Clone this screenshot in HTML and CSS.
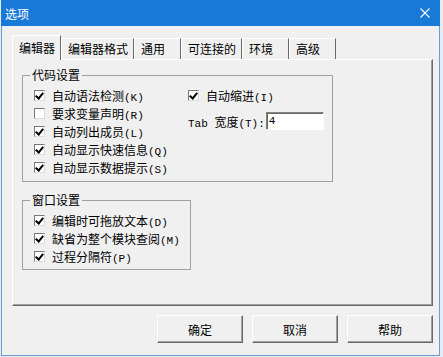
FILE: index.html
```html
<!DOCTYPE html>
<html lang="zh-CN">
<head>
    <meta charset="UTF-8">
    <title>选项</title>
    <link rel="stylesheet" href="styles.css">
</head>
<body>
    <div class="dialog">
        <div class="titlebar">
            <span class="title">选项</span>
            <svg class="close" width="10" height="10" viewBox="0 0 10 10">
                <path d="M0.5 0.5 L9.5 9.5 M9.5 0.5 L0.5 9.5" stroke="#fff" stroke-width="1.1" fill="none"/>
            </svg>
        </div>

        <div class="content">
            <div class="tabs">
                <div class="tab active">编辑器</div>
                <div class="tab">编辑器格式</div>
                <div class="tab">通用</div>
                <div class="tab">可连接的</div>
                <div class="tab">环境</div>
                <div class="tab">高级</div>
            </div>

            <div class="panel">
                <fieldset class="group code-group">
                    <legend>代码设置</legend>
                    <div class="cols">
                        <div class="col-left">
                            <div class="check"><span class="box checked"></span><span>自动语法检测<span class="key">(K)</span></span></div>
                            <div class="check"><span class="box"></span><span>要求变量声明<span class="key">(R)</span></span></div>
                            <div class="check"><span class="box checked"></span><span>自动列出成员<span class="key">(L)</span></span></div>
                            <div class="check"><span class="box checked"></span><span>自动显示快速信息<span class="key">(Q)</span></span></div>
                            <div class="check"><span class="box checked"></span><span>自动显示数据提示<span class="key">(S)</span></span></div>
                        </div>
                        <div class="col-right">
                            <div class="check"><span class="box checked"></span><span>自动缩进<span class="key">(I)</span></span></div>
                            <div class="tab-row">
                                <label><span class="key">Tab </span>宽度<span class="key">(T):</span></label>
                                <input class="text-field" type="text" value="4">
                            </div>
                        </div>
                    </div>
                </fieldset>

                <fieldset class="group window-group">
                    <legend>窗口设置</legend>
                    <div class="check"><span class="box checked"></span><span>编辑时可拖放文本<span class="key">(D)</span></span></div>
                    <div class="check"><span class="box checked"></span><span>缺省为整个模块查阅<span class="key">(M)</span></span></div>
                    <div class="check"><span class="box checked"></span><span>过程分隔符<span class="key">(P)</span></span></div>
                </fieldset>
            </div>

            <div class="buttons">
                <button class="btn">确定</button>
                <button class="btn">取消</button>
                <button class="btn">帮助</button>
            </div>
        </div>
    </div>
</body>
</html>
```

FILE: styles.css
```css
:root {
    --face: #f0f0f0;
    --light: #ffffff;
    --shadow: #a0a0a0;
    --dark: #696969;
    --title-blue: #1979d6;
}

* {
    margin: 0;
    padding: 0;
    box-sizing: border-box;
}

body {
    width: 443px;
    height: 357px;
    overflow: hidden;
    background-color: #e4ebf3;
    font-family: "Noto Sans CJK SC", sans-serif;
    font-size: 12px;
    color: #000;
}

.dialog {
    margin-left: 1px;
    width: 439px;
    height: 356px;
    background-color: var(--face);
    border: 1px solid #6d9bd1;
    border-top: 0;
}

.titlebar {
    height: 26px;
    margin: 0 -1px;
    padding: 0 10px 0 4px;
    background-color: var(--title-blue);
    color: #fff;
    display: flex;
    align-items: center;
    justify-content: space-between;
}

.content {
    padding: 9px 6px 0 10px;
}

/* tab strip */
.tabs {
    display: flex;
    align-items: flex-end;
    height: 25px;
    margin-bottom: -1px;
    position: relative;
    z-index: 1;
}

.tab {
    height: 21px;
    min-width: 47px;
    margin-bottom: 1px;
    padding: 0 5px 0 6px;
    line-height: 20px;
    white-space: nowrap;
    border-top: 1px solid var(--light);
    border-left: 1px solid var(--light);
    border-right: 1px solid var(--dark);
}

.tab.active {
    height: 25px;
    min-width: 49px;
    margin-bottom: 0;
    line-height: 24px;
    background-color: var(--face);
}

.panel {
    height: 247px;
    padding: 8px 0 0 9px;
    border: 1px solid;
    border-color: var(--light) var(--dark) var(--dark) var(--light);
    box-shadow: inset -1px -1px var(--shadow);
}

/* group boxes */
.group {
    border: 1px solid var(--shadow);
    padding: 4px 0 5px 11px;
}

.group legend {
    margin-left: -4px;
    padding: 0 2px;
    line-height: 14px;
}

.code-group {
    width: 311px;
}

.window-group {
    width: 169px;
    margin-top: 11px;
    padding-bottom: 4px;
}

.cols {
    display: flex;
}

.col-left {
    width: 154px;
}

.check {
    display: flex;
    align-items: center;
    gap: 7px;
    height: 18px;
    white-space: nowrap;
}

.box {
    flex: none;
    width: 11px;
    height: 11px;
    background-color: #fff;
    border: 1px solid;
    border-color: #7a7a7a #dcdcdc #dcdcdc #7a7a7a;
    position: relative;
}

.box.checked::after {
    content: "";
    position: absolute;
    left: 2px;
    top: 0px;
    width: 3px;
    height: 6px;
    border: solid #000;
    border-width: 0 2px 2px 0;
    transform: rotate(40deg);
}

.key {
    font-family: "Liberation Mono", monospace;
    font-size: 11px;
}

.tab-row {
    display: flex;
    align-items: center;
    margin-top: 8px;
    white-space: nowrap;
}

.text-field {
    width: 58px;
    height: 18px;
    margin-left: 1px;
    padding-left: 2px;
    background-color: #fff;
    border: 1px solid;
    border-color: #808080 #fff #fff #808080;
    box-shadow: inset 1px 1px #696969;
    font-family: "Liberation Mono", monospace;
    font-size: 11px;
    outline: none;
}

/* dialog buttons */
.buttons {
    display: flex;
    justify-content: flex-end;
    gap: 9px;
    margin-top: 9px;
}

.btn {
    width: 86px;
    height: 28px;
    background-color: var(--face);
    font-family: "Noto Sans CJK SC", sans-serif;
    font-size: 12px;
    color: #000;
    border: 1px solid;
    border-color: var(--light) var(--dark) var(--dark) var(--light);
    box-shadow: inset -1px -1px var(--shadow);
}
```
